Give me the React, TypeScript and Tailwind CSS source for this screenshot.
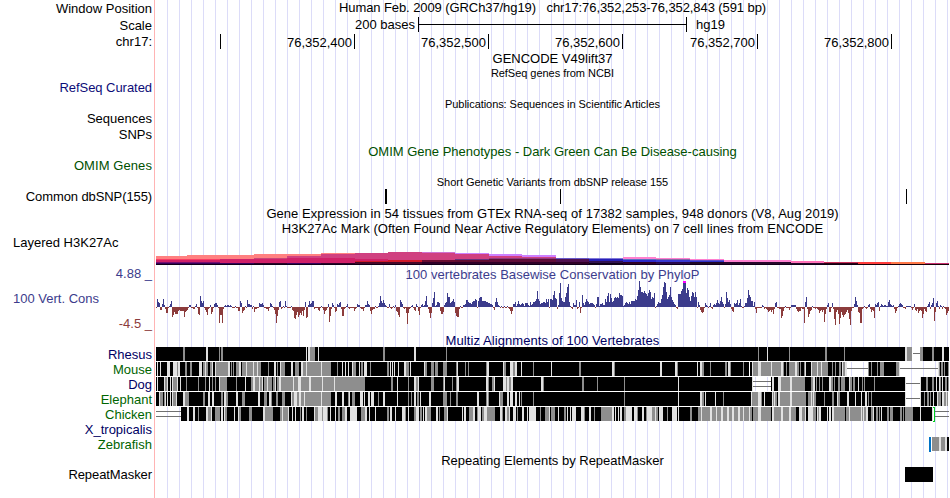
import React from "react";

const CHART_LEFT = 156;
const CHART_WIDTH = 793;

const labels = [
  { text: "Window Position", className: "mt-px text-right text-black" },
  { text: "Scale", className: "mt-0.5 text-right text-black" },
  { text: "chr17:", className: "mt-px text-right text-black" },
  { text: "RefSeq Curated", className: "mt-[31px] text-right tracking-[-0.05px] text-[#0c0c78]" },
  { text: "Sequences", className: "mt-4 text-right text-black" },
  { text: "SNPs", className: "mt-px text-right text-black" },
  { text: "OMIM Genes", className: "mt-4 text-right tracking-[0.08px] text-[#005000]" },
  { text: "Common dbSNP(155)", className: "mt-4 text-right tracking-[-0.1px] text-black" },
  { text: "Layered H3K27Ac", className: "mt-[31px] pl-[13px] text-black" },
  { text: "4.88 _", className: "mt-4 text-right text-[#3c3c8c]" },
  { text: "100 Vert. Cons", className: "mt-2.5 pl-[13px] text-[#3c3c8c]" },
  { text: "-4.5 _", className: "mt-2.5 text-right text-[#8c3c3c]" },
  { text: "Rhesus", className: "mt-4 text-right text-[#000064]" },
  { text: "Mouse", className: "text-right text-[#006400]" },
  { text: "Dog", className: "text-right text-[#000064]" },
  { text: "Elephant", className: "text-right text-[#006400]" },
  { text: "Chicken", className: "text-right text-[#006400]" },
  { text: "X_tropicalis", className: "text-right text-[#000064]" },
  { text: "Zebrafish", className: "text-right text-[#006400]" },
  { text: "RepeatMasker", className: "mt-[15px] text-right tracking-[-0.08px] text-black" },
];

// Layered H3K27Ac: [x start, [[y, colour], ...]], each layer runs down to the next one
const histone: [number, [number, string][]][] = [
  [156, [[256, "#ff8080"], [259, "#f83c64"], [260, "#d02068"], [262, "#781070"], [263, "#38005c"], [264, "#100018"]]],
  [187, [[255, "#ff8080"], [259, "#f83c64"], [260, "#d02068"], [262, "#781070"], [263, "#38005c"], [264, "#100018"]]],
  [220, [[255, "#ff8080"], [259, "#d02068"], [263, "#38005c"], [264, "#100018"]]],
  [254, [[254, "#ff8080"], [258, "#c84478"], [259, "#d02068"], [263, "#300028"], [264, "#100018"]]],
  [287, [[254, "#ff8080"], [256, "#d04080"], [258, "#d02068"], [263, "#38005c"], [264, "#100018"]]],
  [321, [[253, "#ff8080"], [254, "#d04080"], [258, "#d02068"], [263, "#300028"], [264, "#100018"]]],
  [355, [[253, "#d04080"], [259, "#d02068"], [261, "#d01828"], [262, "#480828"], [264, "#100018"]]],
  [388, [[252, "#d04080"], [260, "#d01828"], [262, "#480828"], [264, "#100018"]]],
  [422, [[252, "#d070d0"], [253, "#d04080"], [260, "#680c30"], [262, "#300028"], [264, "#100018"]]],
  [455, [[253, "#cc80ff"], [254, "#d04080"], [259, "#68307c"], [260, "#600c30"], [262, "#300028"], [264, "#100018"]]],
  [489, [[254, "#cc80ff"], [256, "#d04080"], [258, "#903880"], [259, "#600c38"], [262, "#300028"], [264, "#100018"]]],
  [522, [[255, "#cc80ff"], [257, "#d04080"], [258, "#903880"], [259, "#600c38"], [262, "#300028"], [264, "#100018"]]],
  [556, [[258, "#6858c8"], [259, "#501050"], [262, "#300028"], [264, "#100018"]]],
  [589, [[258, "#8078d8"], [259, "#2820b8"], [261, "#301050"], [263, "#100018"]]],
  [623, [[257, "#ff80d0"], [259, "#5870c0"], [260, "#2c28c8"], [262, "#300028"], [264, "#100018"]]],
  [656, [[258, "#ff80d0"], [259, "#8868a8"], [260, "#3838d0"], [262, "#280850"], [264, "#100018"]]],
  [690, [[259, "#ff80d0"], [260, "#6050c8"], [261, "#3030c8"], [262, "#200828"], [264, "#100018"]]],
  [724, [[260, "#ff80d0"], [262, "#28082c"], [264, "#100018"]]],
  [791, [[261, "#ff70b8"], [263, "#28082c"], [264, "#100018"]]],
  [824, [[262, "#c83058"], [263, "#300018"], [264, "#100010"]]],
  [858, [[262, "#ff3c3c"], [264, "#180008"]]],
  [891, [[262, "#ff7848"], [264, "#180008"]]],
  [925, [[263, "#c83070"], [264, "#180008"]]],
];

// PhyloP score per base column, in pixels above or below the zero line
const phyloP: [number, number[]][] = [
  [156, [-1, 8, 5, 4, -3, -3, 3, 8, 2, -2, -6, -6, -1, 1, 3, 6, -10, -8, -5, -7, -7, -7, -4, -3, -4, -4, -4, -4, -10, -5, -4, -3, -1, 2, 2, -1, -1, -2, -2, 1, 3, -1, -7, -8]],
  [200, [11, 6, 4, 6, -1, -3, -5, -8, -2, -1, 2, -7, -5, -1, 3, 4, 4, 2, -1, -16, -8, -8, -16, -2, 1, 2, 1, 2, 2, 1, 2, 1, -1, -1, -1, 1, -1, -1, -4, -4]],
  [240, [6, 4, -6, -4, -3, 1, -1, 7, 3, 3, 2, 2, -2, 1, -5, -2, -2, -1, -1, 4, 3, 3, 4, 2, -1, -1, -2, -2, -4, -1, 4, 3, 1, -1, -3, -7, -16, -9, -3, 5]],
  [280, [6, -2, -1, 1, -1, 6, 1, -1, -1, -1, -1, 1, -3, -4, -11, -12, -8, -5, -10, -8, -6, -8, -4, -9, -3, 5, -11, -10, 2, 6, 3, 4, 6, 6, -2, -1, -1, -1, -3, -4]],
  [320, [-1, 1, -1, -3, -7, -4, -3, -1, 3, -15, -9, -2, 4, 2, -1, -5, -4, 3, 2, 4, 5, -2, -9, -9, -2, -1, 1, 3, -1, -2, -1, -1, -1, -1, -4, -2, -1, 3, 2, 2]],
  [360, [-1, -2, -2, -4, -1, 2, 2, 6, 3, 2, -4, -7, -3, -2, -2, 1, -1, -1, 1, 4, 11, 6, 4, 7, 4, 2, 1, -1, -1, 3, -1, -2, -1, 1, -1, 2, -4, -5, -8, -10]],
  [400, [7, 5, 3, -1, -2, -1, -6, -17, -6, -2, -1, 1, 2, -1, -3, -4, 3, 1, -4, -8, -1, 2, 3, 1, 2, 6, 11, 2, -2, -6, -11, -6, 4, 9, 15, 1, 2, 5, 5, 4]],
  [440, [-4, -7, -7, -5, 2, 4, 5, 14, 10, 10, 4, 5, 6, 8, 5, -6, -9, -10, -10, -2, 1, -1, -1, 2, 2, 3, 7, 7, 5, 4, 4, 3, 5, 6, 6, 8, 7, -1, 6, 9]],
  [480, [10, 10, 6, 6, 6, 6, 5, 5, 4, 4, 3, 3, 2, -1, -3, 5, 9, 5, 2, 1, -1, 1, -1, -1, 1, -1, -1, 1, -1, -2, -4, -7, -4, 3, 3, 5, 1, 3, 6, 3]],
  [520, [2, 3, 4, 3, 1, 4, 4, 4, 2, 1, 5, 2, 3, 5, 5, 6, 8, 16, 8, 6, 3, 4, 4, 5, 5, 4, 8, 5, 8, -1, 8, 8, 7, 12, 16, 9, 8, -2, 2, 14]],
  [560, [24, 9, 6, 5, 5, 10, 14, 20, 23, 5, 1, -1, -2, 4, 2, 2, 7, -2, -1, 5, -6, -1, 12, 4, 2, 5, 8, 6, 5, 3, 4, 4, 4, 3, 2, -1, 3, 10, 10, 1]],
  [600, [3, 3, 4, 2, 2, 8, 5, 11, 14, 5, 13, 9, 5, 6, 9, 10, 9, 10, 9, 14, 12, 12, 11, 1, 2, 4, 5, 4, 3, 5, 3, 6, 6, 6, 6, 8, 7, 11, 17, 26]],
  [640, [20, 15, 15, 14, 16, 14, 13, 11, 14, 17, 15, 8, 10, 9, 14, -1, 1, 3, 5, 4, 4, 8, 12, 20, 25, 24, 15, 8, 10, 12, 20, 10, 7, 5, 3, 2, -1, -2, 13, 13]],
  [680, [13, 16, 18, 26, 26, 26, 14, 19, 17, 10, 6, 11, 15, 14, 10, 15, 10, -1, 5, 2, -3, -5, -6, -5, -1, 4, 2, 1, -1, 1, 4, -1, -2, 2, 3, 2, 4, 7, 4, 3]],
  [720, [6, 10, 5, 3, -1, 3, 15, 9, 5, 7, 3, -2, -4, -5, 4, 3, 4, 7, 2, 4, 8, 1, -1, -1, 1, 4, 4, 9, 17, 12, 10, 6, 6, 1, 5, -2, -6, -1, -1, -1]],
  [760, [-1, -1, 2, 1, -2, -1, -2, -3, -5, -4, -3, -5, -3, -7, -2, 4, 5, -1, -1, -2, -2, -11, -9, -4, -1, 1, -1, -1, -1, -3, -1, 2, 2, 2, 2, 2, -2, -4, -5, -4]],
  [800, [-4, -1, -2, -2, -16, 5, 10, -2, -10, -7, -4, -3, 1, -1, -1, -2, -1, -2, -3, -6, -4, -3, -5, -3, -15, -7, -2, 2, 4, -5, -5, -1, 4, -2, -12, -18, -5, -3, -7, -17]],
  [840, [-11, -5, -8, -10, -8, -7, -5, -3, -6, -12, -18, -4, -1, -1, 3, 10, 6, 2, -5, -6, -16, -16, -2, -1, 1, -1, -2, -1, 2, 3, -2, -5, -3, -4, -11, 3, 2, 4, 5, -4]],
  [880, [1, 3, 2, 1, 2, 2, 1, 1, 5, 7, 3, 2, 1, 2, -2, -6, -4, -1, 1, 3, 4, 3, 2, -1, -1, -2, 1, 1, 1, 1, 1, -1, -3, -1, 3, -3, -4, -2, -6, -4]],
  [920, [-3, -4, -11, -7, -2, -4, -5, 1, 3, 5, -2, 2, 4, 9, -14, -5, 4, 6, 1, -2, 2, 1, -2, 1, -1, -2, -8, -6, -4]],
];

// Multiz rows as run lengths: b = identical, g = partial, l = weak
const alignments: { y: number; runs: [number, string][] }[] = [
  {
    y: 347,
    runs: [
      [156, "b27g2b21l2b11g1b1g2b83l1b1l2g5b3l1b31"],
      [350, "b33g2b29l2b30g1b103"],
      [550, "b200"],
      [750, "b8g1b8l1b21g1b35g2b17g1b60l2g5"],
      [920, "g3b9g2b8l2b5"],
    ],
  },
  {
    y: 362,
    runs: [
      [156, "b1l1b2l1b6l3b3l4g1l2b5g2b3g2b7l3b1g2l1g2b2g2l1b2l1g12l2b1g1b1g1b2g3l2b1g4l1g6l1g3l1g3b7g1b5l2b1g1b2l1g4b6l2b2g4b2l2g3l1g14l1g9b6g1b4l1b2l1b2l1b1"],
      [350, "b2l1g3b3l1b1g2b1l3b3g1b16g2b1l1b1l1b1l1b3l1b5l2g3b1l1b13l1g2b4g3b1g2g1b5g4b9g1l1b7g1b2g1b17g1l2b14l1g2b1b3l3g2l2b4l1b11g1b16"],
      [550, "b1l1b27g2b31l2g1b45l2b13l2g1b19l1b2l2g2b6g1b14g2b1l2g1b12g1b5"],
      [750, "b2l1g5l3g10l1g9l2g1b2g1b2g6l2g2b1g1b3g1l1b5l1g5l1g3l1g6b4g1b2g1b3g2b1l1g2l2"],
      [868, "g1b2g1b5g1b2g4b12g3l1"],
      [938, "l1g1b1g2b1g1b3g1"],
    ],
  },
  {
    y: 377,
    runs: [
      [156, "b1l1b6l1g2l1b2l1b1l1g4l1b2l1b5g1b11g1b6g1b3l1b2g1b2g1b3l1g4g3b9g1b8l1b5g2l2g4l1g2l1b1g3l1g4b1g2l1b1g2l2g12l1g4l3g8l2g11l1g11l1g16"],
      [350, "g15b26g2b4l1b10g1b5l2g2l1b12g3b9g1l1b7g1b3g1l2b27l2g1b3g2l1b8l3g1l2g2l2b28l2g1b6"],
      [550, "b32g2b13g1b26g1b53l1b71"],
      [750, "b2l1"],
      [771, "b1l2b4l3g9l2g13b6g2l2b1g1b2g1b2g1b6l2g2b1g1b3g2b1g4b4l1g2b1g2b3l1b3g1b1g1b9g1b30l1"],
      [920, "l1b5g2b4g2b2l1b2l1g1b1l1b2g2b1g1"],
    ],
  },
  {
    y: 392,
    runs: [
      [156, "b3l1g3b1g1l1b1l1b2l1b1l1g3l1b6l2g4b14g2b3l2b2l2b7g2b1l2g2b8l2b4g3b13l2b4g3b2l2g1b4g2b4g3b6l1g2l3g2l2g3l1g2g14l1g9b4l2b5l2b4g1l1"],
      [350, "b2g3b5l3b1l1b3l2b1l3b4g1b4l2b12l1b10g1b2g1b2l2b1g2b1l1b8l2b12g4b3g1b5g2b19l2b7g1l1g1b10l1g3b4l2b1l3b2l2b2l1b1g1b11g1b16"],
      [550, "b74g1b53l1b21l2g2b1l1b9l1b7g1b26"],
      [750, "b1l1g6l3g1b2l1b7l1g1l1g2b1l2g10l2g14b2g3l1g1l1g2b8g1b7g2b3l1g2b2b5l2b6l1b5l1b3l2b1g1b2g1b33l1"],
      [920, "l1b3g1b2g2b1g1b2l1b3l1g3b1l2g2l1g1"],
    ],
  },
  {
    y: 407,
    runs: [
      [181, "b6l2b4l2b3g1b7l2g3l1b3g5b1l2b1l1g2b7l1b3l1g2b8g3b11l2g8b7g2l1g5l1b3l1b2l1b4g1b1l2b2g1b7l1g3l4g1l4g1b2l1b4l1b2g2b2g3l2b3"],
      [350, "l7b4g4l2b2l1b5l1b11g2b1l2b3l1b6l3g1b2l1b5g2l3b1g2b1l1b1l2g4b5l2b1g1b4g3l1b14l1b1l2b3g4l2b2g1l3b1g2l3g8b5l2g1b2l2g2l1b3l3b1g1b4l2b3l1b1l7b4g1b4g4l1"],
      [550, "b1g4b3l1b5g2b1l1b2l1b1l4b5l3g1b1b3l2b3g1b6g11l2b1l1b2l1b1l2b2g2l6b2l3g1b4l2b2g1l1l4g3l1g2b1l4b4g1b4l5b1l1b11g2b6g3l1g2g6l2g4l1g4l2g4l2g3l2g4l2g3l1g5l1"],
      [750, "g2b1g5l3g10b1l2g7l2g6l2g5b3l3g3l1b2l5g3b1l1g1l2b6l1b1l2b1l2g11b1g3l1g11l1g1l1g2l2b3g2l1b2g2b1g1b1l1b5g2b1g3b7g2b1g1b1g8b7l1b11l1"],
    ],
  },
  { y: 437, runs: [[932, "g7l2g4l2b2"]] },
];

const gapLines = [
  { x: 913, y: 353, width: 7 },
  { x: 847, y: 368, width: 21 },
  { x: 900, y: 368, width: 38 },
  { x: 753, y: 381, width: 18 },
  { x: 753, y: 386, width: 18 },
  { x: 906, y: 383, width: 14 },
  { x: 906, y: 398, width: 14 },
  { x: 156, y: 411, width: 25 },
  { x: 156, y: 416, width: 25 },
  { x: 935, y: 411, width: 14 },
  { x: 935, y: 416, width: 14 },
];

const shades: Record<string, string> = {
  b: "#000000",
  g: "#8e8e8e",
  l: "#e1e1e1",
};

function expandRuns(start: number, runs: string) {
  let x = start;
  return (runs.match(/[bgl]\d+/g) ?? []).map((run) => {
    const width = Number(run.slice(1));
    const cell = { x, width, fill: shades[run[0]] };
    x += width;
    return cell;
  });
}

function HistoneTrack() {
  return (
    <svg
      className="mt-4 block"
      width={CHART_WIDTH}
      height={13}
      viewBox={`${CHART_LEFT} 252 ${CHART_WIDTH} 13`}
      shapeRendering="crispEdges"
    >
      {histone.map(([x, layers], i) => {
        const end = i + 1 < histone.length ? histone[i + 1][0] : CHART_LEFT + CHART_WIDTH;
        return layers.map(([y, fill]) => (
          <rect key={`${x}-${y}`} x={x} y={y} width={end - x} height={265 - y} fill={fill} />
        ));
      })}
    </svg>
  );
}

function ConservationTrack() {
  return (
    <svg
      className="block"
      width={CHART_WIDTH}
      height={45}
      viewBox={`${CHART_LEFT} 281 ${CHART_WIDTH} 45`}
      shapeRendering="crispEdges"
    >
      {phyloP.map(([start, scores]) =>
        scores.map((score, i) => (
          <rect
            key={start + i}
            x={start + i}
            y={score > 0 ? 307 - score : 307}
            width={1}
            height={Math.abs(score)}
            fill={score > 0 ? "#3c3c8c" : "#8c3c3c"}
          />
        ))
      )}
      {/* clipped score */}
      <rect x={683} y={281} width={3} height={2} fill="#ff00ff" />
    </svg>
  );
}

function AlignmentTrack() {
  return (
    <svg
      className="block"
      width={CHART_WIDTH}
      height={105}
      viewBox={`${CHART_LEFT} 347 ${CHART_WIDTH} 105`}
      shapeRendering="crispEdges"
    >
      {[361, 376, 391, 406].map((y) => (
        <rect key={y} x={CHART_LEFT} y={y} width={749} height={1} fill="#ffffff" />
      ))}
      {alignments.map((row) =>
        row.runs.map(([start, runs]) =>
          expandRuns(start, runs).map((cell) => (
            <rect key={`${row.y}-${start}-${cell.x}`} x={cell.x} y={row.y} width={cell.width} height={14} fill={cell.fill} />
          ))
        )
      )}
      {gapLines.map((line) => (
        <rect key={`${line.x}-${line.y}`} x={line.x} y={line.y} width={line.width} height={1} fill="#707070" />
      ))}
      <path d="M933 407.5h1.5v14H933" fill="none" stroke="#00d020" />
      <rect x={929} y={437} width={2} height={15} fill="#0072c6" />
    </svg>
  );
}

function Ruler() {
  return (
    <div className="mt-0.5 flex h-[15px] leading-[17px]">
      <div className="w-[65px] border-r border-black" />
      <div className="w-[134px] border-r border-black pr-0.5 text-right">76,352,400</div>
      <div className="w-[134px] border-r border-black pr-0.5 text-right">76,352,500</div>
      <div className="w-[134px] border-r border-black pr-0.5 text-right">76,352,600</div>
      <div className="w-[135px] border-r border-black pr-0.5 text-right">76,352,700</div>
      <div className="w-[134px] border-r border-black pr-0.5 text-right">76,352,800</div>
    </div>
  );
}

export default function App() {
  return (
    <main className="flex h-[498px] w-[950px] overflow-hidden bg-white font-['Liberation_Sans',Arial,sans-serif] text-[13px] leading-[15px] whitespace-pre">
      {/* Track names */}
      <div className="flex w-[154px] shrink-0 flex-col pr-0.5">
        {labels.map((label) => (
          <div key={label.text} className={`h-[15px] shrink-0 ${label.className}`}>
            {label.text}
          </div>
        ))}
      </div>
      <div className="w-0.5 shrink-0 border-l border-[#ffb4b4]" />

      {/* Tracks */}
      <div className="flex w-[793px] shrink-0 flex-col bg-[linear-gradient(to_right,#dcdcf8_1px,transparent_1px)] bg-[length:12px_100%] bg-[position:11px_0] text-center text-black">
        <div className="h-[15px] tracking-[-0.085px]">
          Human Feb. 2009 (GRCh37/hg19)   chr17:76,352,253-76,352,843 (591 bp)
        </div>

        <div className="mt-0.5 flex h-[15px]">
          <div className="w-[262px] pr-[3px] text-right">200 bases</div>
          <div className="flex w-[269px] items-center border-x border-black">
            <div className="h-px w-full bg-black" />
          </div>
          <div className="pl-[9px]">hg19</div>
        </div>

        <Ruler />

        <div className="mt-0.5 h-[15px]">GENCODE V49lift37</div>
        <div className="h-[15px] text-[11px] tracking-[-0.04px]">RefSeq genes from NCBI</div>
        <div className="mt-4 h-[15px] text-[11px] tracking-[-0.06px]">Publications: Sequences in Scientific Articles</div>
        <div className="mt-8 h-[15px] text-[#005000]">OMIM Gene Phenotypes - Dark Green Can Be Disease-causing</div>
        <div className="mt-4 h-3.5 text-[11px] tracking-[-0.04px]">Short Genetic Variants from dbSNP release 155</div>

        <div className="flex h-[15px]">
          <div className="ml-[229px] w-0.5 bg-black" />
          <div className="ml-[173px] w-px bg-black" />
          <div className="ml-[345px] w-px bg-black" />
        </div>

        <div className="mt-0.5 h-[15px] tracking-[0.055px]">
          Gene Expression in 54 tissues from GTEx RNA-seq of 17382 samples, 948 donors (V8, Aug 2019)
        </div>
        <div className="h-[15px] tracking-[0.045px]">
          H3K27Ac Mark (Often Found Near Active Regulatory Elements) on 7 cell lines from ENCODE
        </div>
        <HistoneTrack />

        <div className="mt-0.5 h-3.5 tracking-[0.04px] text-[#3c3c8c]">100 vertebrates Basewise Conservation by PhyloP</div>
        <ConservationTrack />

        <div className="mt-[7px] h-3.5 tracking-[0.08px] text-[#000064]">Multiz Alignments of 100 Vertebrates</div>
        <AlignmentTrack />

        <div className="mt-px h-3.5">Repeating Elements by RepeatMasker</div>
        <div className="ml-[749px] h-[15px] w-7 bg-black" />
      </div>
    </main>
  );
}
